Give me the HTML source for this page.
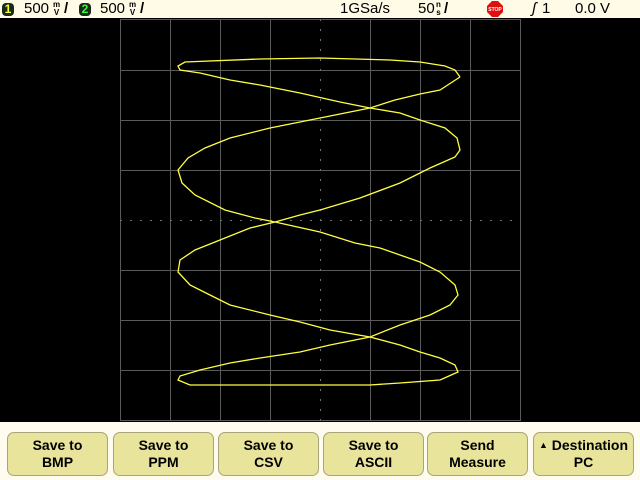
<!DOCTYPE html>
<html><head><meta charset="utf-8"><style>
*{margin:0;padding:0;box-sizing:border-box}
body{width:640px;height:480px;background:#000;position:relative;overflow:hidden;font-family:"Liberation Sans",sans-serif}
.top{position:absolute;left:0;top:0;width:640px;height:18px;background:#fffbe6;color:#000;font-size:15px;line-height:18px}
.t{position:absolute;top:0}
.badge{position:absolute;top:3px;width:12px;height:13px;border-radius:4px;background:#1a2a1a;font-size:12px;font-weight:bold;line-height:13px;text-align:center}
.frac{position:absolute;top:1px;font-size:8px;line-height:8px;text-align:center;font-weight:bold}
.bot{position:absolute;left:0;top:422px;width:640px;height:58px;background:#fffbee}
.btn{position:absolute;top:432px;width:101px;height:44px;background:#e8e49c;border:1px solid #a8a47c;border-radius:7px;font-size:14px;font-weight:bold;text-align:center;line-height:17px;padding-top:4px;color:#000}
</style></head><body>
<div class="top">
<div class="badge" style="left:2px;color:#ffff30">1</div>
<div class="t" style="left:24px">500</div>
<div class="frac" style="left:53px">m<br>V</div>
<div class="t" style="left:64px;font-weight:bold">/</div>
<div class="badge" style="left:79px;color:#30ff30">2</div>
<div class="t" style="left:100px">500</div>
<div class="frac" style="left:129px">m<br>V</div>
<div class="t" style="left:140px;font-weight:bold">/</div>
<div class="t" style="left:340px">1GSa/s</div>
<div class="t" style="left:418px">50</div>
<div class="frac" style="left:436px">n<br>s</div>
<div class="t" style="left:444px;font-weight:bold">/</div>
<svg style="position:absolute;left:487px;top:1px" width="16" height="16" viewBox="0 0 16 16"><polygon points="5,0 11,0 16,5 16,11 11,16 5,16 0,11 0,5" fill="#e01010"/><text x="8" y="10" font-size="5" fill="#fff" text-anchor="middle" font-family="Liberation Sans" font-weight="bold">STOP</text></svg>
<div class="t" style="left:532px;font-style:italic">ʃ</div>
<div class="t" style="left:542px">1</div>
<div class="t" style="left:575px">0.0 V</div>
</div>
<svg style="position:absolute;left:0;top:0" width="640" height="480">
<g stroke="#5a5a5a" stroke-width="1" fill="none">
<path d="M120.5 19.5H520.5V420.5H120.5Z"/>
<path d="M170.5 19V421M220.5 19V421M270.5 19V421M370.5 19V421M420.5 19V421M470.5 19V421"/>
<path d="M120 70.5H520M120 120.5H520M120 170.5H520M120 270.5H520M120 320.5H520M120 370.5H520"/>
<path d="M320.5 19V421M120 220.5H520" stroke-dasharray="2,8" stroke="#707070"/>
</g>
<polyline fill="none" stroke="#ffff40" stroke-width="1.3" points="460,77 440,90 420,94 395,100 370,108 320,118 270,128 230,138 205,148 188,158 178,170 182,183 195,195 225,210 255,218 275,222 320,232 355,243 380,248 420,262 440,272 455,285 458,295 450,305 430,315 400,325 370,337 330,345 300,352 260,358 230,363 200,370 180,376 178,380 190,385 240,385 370,385 400,383 440,380 458,372 455,365 440,358 420,352 400,345 370,337 330,330 300,322 270,315 230,305 210,295 190,285 178,272 180,260 195,250 220,240 250,228 275,222 300,215 320,210 360,198 400,183 430,168 455,157 460,150 457,138 445,128 420,120 400,113 370,108 340,102 300,93 260,85 230,80 200,73 180,70 178,66 185,62 260,59 320,58 390,60 420,62 445,66 455,70 460,77"/>
</svg>
<div class="bot"></div>
<div class="btn" style="left:7px">Save to<br>BMP</div>
<div class="btn" style="left:113px">Save to<br>PPM</div>
<div class="btn" style="left:218px">Save to<br>CSV</div>
<div class="btn" style="left:323px">Save to<br>ASCII</div>
<div class="btn" style="left:427px">Send<br>Measure</div>
<div class="btn" style="left:533px"><span style="font-size:9px;vertical-align:2px">▲</span> Destination<br>PC</div>
</body></html>
